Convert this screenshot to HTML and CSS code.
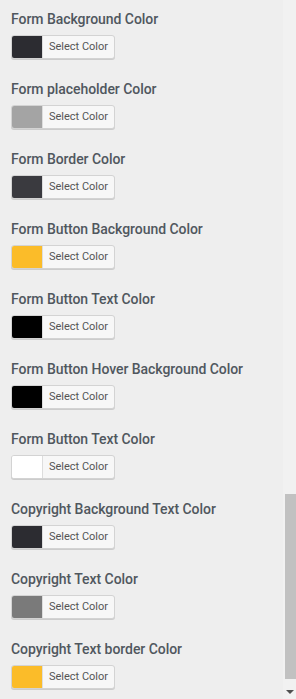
FILE: index.html
```html
<!DOCTYPE html>
<html>
<head>
<meta charset="utf-8">
<link rel="stylesheet" href="styles.css">
</head>
<body>
<div class="panel">
  <div class="item"><div class="label">Form Background Color</div><button class="picker"><span class="swatch" style="background:#2c2c31"></span><span class="txt">Select Color</span></button></div>
  <div class="item"><div class="label">Form placeholder Color</div><button class="picker"><span class="swatch" style="background:#a4a4a4"></span><span class="txt">Select Color</span></button></div>
  <div class="item"><div class="label">Form Border Color</div><button class="picker"><span class="swatch" style="background:#3a3a3f"></span><span class="txt">Select Color</span></button></div>
  <div class="item"><div class="label">Form Button Background Color</div><button class="picker"><span class="swatch" style="background:#fbbc29"></span><span class="txt">Select Color</span></button></div>
  <div class="item"><div class="label">Form Button Text Color</div><button class="picker"><span class="swatch" style="background:#000000"></span><span class="txt">Select Color</span></button></div>
  <div class="item"><div class="label">Form Button Hover Background Color</div><button class="picker"><span class="swatch" style="background:#000000"></span><span class="txt">Select Color</span></button></div>
  <div class="item"><div class="label">Form Button Text Color</div><button class="picker"><span class="swatch" style="background:#ffffff"></span><span class="txt">Select Color</span></button></div>
  <div class="item"><div class="label">Copyright Background Text Color</div><button class="picker"><span class="swatch" style="background:#2c2c31"></span><span class="txt">Select Color</span></button></div>
  <div class="item"><div class="label">Copyright Text Color</div><button class="picker"><span class="swatch" style="background:#7a7a7a"></span><span class="txt">Select Color</span></button></div>
  <div class="item"><div class="label">Copyright Text border Color</div><button class="picker"><span class="swatch" style="background:#fbbc29"></span><span class="txt">Select Color</span></button></div>
</div>
<div class="scrollbar">
  <div class="thumb"></div>
  <div class="arrow"></div>
</div>
</body>
</html>
```
FILE: styles.css
```css
html, body {
  margin: 0;
  padding: 0;
  background: #eeeeee;
  width: 296px;
  height: 699px;
  overflow: hidden;
  position: relative;
}
.panel {
  padding: 9px 0 0 11px;
  font-family: Roboto, "Liberation Sans", sans-serif;
}
.item {
  height: 70px;
}
.label {
  font-size: 14px;
  font-weight: 500;
  color: #50575e;
  line-height: 20px;
  height: 26px;
  letter-spacing: -0.05px;
}
.picker {
  display: flex;
  align-items: stretch;
  height: 24px;
  width: 104px;
  padding: 0;
  margin: 0;
  border: 1px solid #d3d3d3;
  border-radius: 3px;
  background: #f7f7f7;
  box-shadow: 0 1px 0 #cccccc;
  overflow: hidden;
  cursor: pointer;
  font-family: Roboto, "Liberation Sans", sans-serif;
}
.swatch {
  width: 30px;
  flex: none;
  border-right: 1px solid #dddddd;
}
.txt {
  flex: 1;
  font-size: 11px;
  color: #555555;
  line-height: 22px;
  text-align: center;
}
.scrollbar {
  position: absolute;
  top: 0;
  right: 0;
  width: 13px;
  height: 699px;
  background: #f1f1f1;
}
.thumb {
  position: absolute;
  left: 2px;
  right: 0;
  top: 494px;
  height: 185px;
  background: #c1c1c1;
}
.arrow {
  position: absolute;
  left: 3px;
  top: 690px;
  width: 0;
  height: 0;
  border-left: 4px solid transparent;
  border-right: 4px solid transparent;
  border-top: 4px solid #505050;
}
```
